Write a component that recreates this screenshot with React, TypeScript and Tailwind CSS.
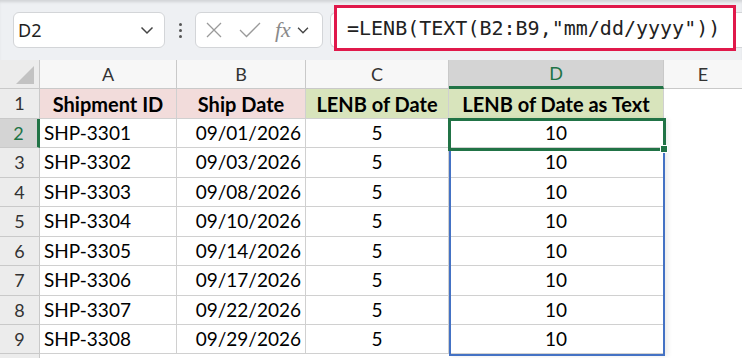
import React from "react";

type Row = { id: string; date: string; len: number; text: number };

const rows: Row[] = [
  { id: "SHP-3301", date: "09/01/2026", len: 5, text: 10 },
  { id: "SHP-3302", date: "09/03/2026", len: 5, text: 10 },
  { id: "SHP-3303", date: "09/08/2026", len: 5, text: 10 },
  { id: "SHP-3304", date: "09/10/2026", len: 5, text: 10 },
  { id: "SHP-3305", date: "09/14/2026", len: 5, text: 10 },
  { id: "SHP-3306", date: "09/17/2026", len: 5, text: 10 },
  { id: "SHP-3307", date: "09/22/2026", len: 5, text: 10 },
  { id: "SHP-3308", date: "09/29/2026", len: 5, text: 10 },
];

// row heights alternate so 9 rows fill 89..354
const heights = ["h-[30px]", "h-[29px]", "h-[30px]", "h-[29px]", "h-[30px]", "h-[29px]", "h-[30px]", "h-[29px]", "h-[29px]"];

const cellFont = { fontFamily: "Lato, 'Open Sans', sans-serif" };

function Chevron({ className = "" }: { className?: string }) {
  return (
    <svg width="14" height="9" viewBox="0 0 14 9" className={className}>
      <path d="M1.5 1.5 L7 7 L12.5 1.5" fill="none" stroke="#444" strokeWidth="1.5" />
    </svg>
  );
}

function Toolbar() {
  return (
    <div className="relative h-[60px] bg-[#eef0f3] flex items-center shadow-[inset_0_3px_3px_-1px_rgba(0,0,0,0.12)]">
      {/* name box */}
      <div className="ml-[13px] w-[152px] h-[36px] rounded-[6px] border border-[#d3d5d8] bg-white flex items-center pl-[4px] pr-[10px] justify-between">
        <span className="text-[18px] text-[#1f1f1f]" style={{ fontFamily: "'Noto Sans', sans-serif" }}>D2</span>
        <Chevron />
      </div>

      {/* dots */}
      <div className="ml-[14px] flex flex-col gap-[3px]">
        <span className="w-[3px] h-[3px] bg-[#555] rounded-full" />
        <span className="w-[3px] h-[3px] bg-[#555] rounded-full" />
        <span className="w-[3px] h-[3px] bg-[#555] rounded-full" />
      </div>

      {/* cancel / enter / fx */}
      <div className="ml-[13px] w-[128px] h-[36px] rounded-[6px] border border-[#d3d5d8] bg-white flex items-center pl-[9px]">
        <svg width="18" height="18" viewBox="0 0 18 18">
          <path d="M2 2 L16 16 M16 2 L2 16" stroke="#9a9a9a" strokeWidth="1.3" />
        </svg>
        <svg width="24" height="18" viewBox="0 0 24 18" className="ml-[15px]">
          <path d="M2 9 L8.5 15.5 L22 2" fill="none" stroke="#9a9a9a" strokeWidth="1.3" />
        </svg>
        <span className="ml-[13px] text-[22px] italic text-[#8a8a8a] leading-none" style={{ fontFamily: "'Liberation Serif', serif" }}>
          fx
        </span>
        <Chevron className="ml-[5px] scale-90" />
      </div>

      {/* formula bar */}
      <div className="relative ml-[7px] flex-1 h-[36px] rounded-l-[6px] border border-r-0 border-[#d3d5d8] bg-white">
        <div className="absolute left-[3px] right-[6px] top-[-8px] h-[46px] border-[3px] border-[#e0194b] bg-white flex items-center pl-[10px]">
          <span className="text-[20px] text-[#222] whitespace-nowrap" style={{ fontFamily: "'DejaVu Sans Mono', monospace" }}>
            =LENB(TEXT(B2:B9,"mm/dd/yyyy"))
          </span>
        </div>
      </div>
    </div>
  );
}

function HeaderRow() {
  const col = "h-full border-r border-[#c9c9c9] border-b flex items-center justify-center text-[18px] text-[#333]";
  return (
    <div className="flex h-[29px] bg-[#f7f7f7]" style={cellFont}>
      <div className="w-[40px] h-full bg-[#ececec] border-r border-b border-[#c9c9c9] relative">
        <svg width="20" height="20" viewBox="0 0 20 20" className="absolute right-[4px] bottom-[3px]">
          <path d="M19 1 L19 19 L1 19 Z" fill="#c2c2c2" />
        </svg>
      </div>
      <div className={`${col} w-[137px] border-[#c9c9c9]`}>A</div>
      <div className={`${col} w-[129px] border-[#c9c9c9]`}>B</div>
      <div className={`${col} w-[143px] border-[#c9c9c9]`}>C</div>
      <div className="w-[215px] h-full bg-[#d4d4d4] border-r border-[#c9c9c9] border-b-[3px] border-b-[#217346] flex items-center justify-center text-[18px] text-[#217346]">
        D
      </div>
      <div className={`${col} flex-1 border-r-0 border-[#c9c9c9]`}>E</div>
    </div>
  );
}

export default function App() {
  const cell = "h-full border-r border-b border-[#d0d0d0] flex items-center text-[19px] text-black";
  const head = "h-full border-r border-b border-[#d0d0d0] flex items-center justify-center text-[20px] font-bold text-black";
  return (
    <div className="w-[742px] h-[358px] overflow-hidden bg-white relative" style={cellFont}>
      <Toolbar />
      <HeaderRow />

      {/* row 1 */}
      <div className={`flex ${heights[0]}`}>
        <div className="w-[40px] h-full bg-[#ececec] border-r border-b border-[#c9c9c9] flex items-center justify-center text-[18px] text-[#333]">1</div>
        <div className={`${head} w-[137px] bg-[#f2dcdb]`}>Shipment ID</div>
        <div className={`${head} w-[129px] bg-[#f2dcdb]`}>Ship Date</div>
        <div className={`${head} w-[143px] bg-[#d8e4bc]`}>LENB of Date</div>
        <div className={`${head} w-[215px] bg-[#d8e4bc]`}>LENB of Date as Text</div>
        <div className="flex-1" />
      </div>

      {rows.map((r, i) => {
        const active = i === 0;
        return (
          <div key={r.id} className={`flex ${heights[i + 1]}`}>
            <div
              className={`w-[40px] h-full border-b border-[#c9c9c9] flex items-center justify-center text-[18px] ${
                active ? "bg-[#d4d4d4] text-[#217346] border-r-[3px] border-r-[#217346]" : "bg-[#ececec] text-[#333] border-r"
              }`}
            >
              {i + 2}
            </div>
            <div className={`${cell} w-[137px] pl-[4px]`}>{r.id}</div>
            <div className={`${cell} w-[129px] justify-end pr-[4px]`}>{r.date}</div>
            <div className={`${cell} w-[143px] justify-center`}>{r.len}</div>
            <div className={`${cell} w-[215px] justify-center`}>{r.text}</div>
            <div className="flex-1" />
          </div>
        );
      })}

      {/* row 10 stub */}
      <div className="flex h-[10px]">
        <div className="w-[40px] h-full bg-[#ececec] border-r border-[#c9c9c9]" />
      </div>

      {/* selected range D2:D9 */}
      <div className="absolute left-[449px] top-[119px] w-[216px] h-[237px] border-2 border-[#4472c4] shadow-[3px_0_5px_rgba(0,0,0,0.08)] pointer-events-none" />
      {/* active cell D2 */}
      <div className="absolute left-[448px] top-[118px] w-[218px] h-[33px] border-[3px] border-[#217346] pointer-events-none" />
      {/* fill handle */}
      <div className="absolute left-[660px] top-[145px] w-[8px] h-[8px] bg-[#217346] border border-white pointer-events-none" />
    </div>
  );
}
